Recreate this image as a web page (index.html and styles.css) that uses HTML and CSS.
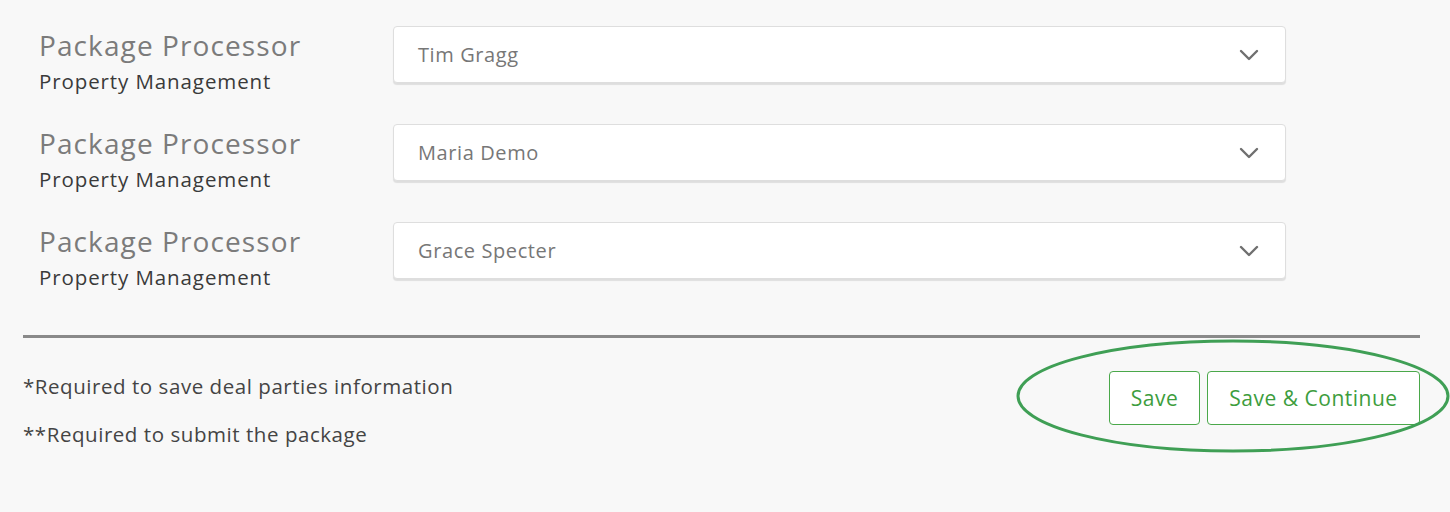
FILE: index.html
```html
<!DOCTYPE html>
<html>
<head>
<meta charset="utf-8">
<link rel="stylesheet" href="styles.css">
</head>
<body>
<div class="page">
  <div class="rows">
    <div class="row">
      <div class="label">
        <div class="title">Package Processor</div>
        <div class="sub">Property Management</div>
      </div>
      <div class="select">
        <span class="value">Tim Gragg</span>
        <svg class="chev" width="20" height="12" viewBox="0 0 20 12"><path d="M2 2 L10 10 L18 2" fill="none" stroke="#6f6f6f" stroke-width="2.4" stroke-linecap="round" stroke-linejoin="round"/></svg>
      </div>
    </div>
    <div class="row">
      <div class="label">
        <div class="title">Package Processor</div>
        <div class="sub">Property Management</div>
      </div>
      <div class="select">
        <span class="value">Maria Demo</span>
        <svg class="chev" width="20" height="12" viewBox="0 0 20 12"><path d="M2 2 L10 10 L18 2" fill="none" stroke="#6f6f6f" stroke-width="2.4" stroke-linecap="round" stroke-linejoin="round"/></svg>
      </div>
    </div>
    <div class="row">
      <div class="label">
        <div class="title">Package Processor</div>
        <div class="sub">Property Management</div>
      </div>
      <div class="select">
        <span class="value">Grace Specter</span>
        <svg class="chev" width="20" height="12" viewBox="0 0 20 12"><path d="M2 2 L10 10 L18 2" fill="none" stroke="#6f6f6f" stroke-width="2.4" stroke-linecap="round" stroke-linejoin="round"/></svg>
      </div>
    </div>
  </div>
  <hr class="sep">
  <div class="footer">
    <div class="notes">
      <p class="note">*Required to save deal parties information</p>
      <p class="note">**Required to submit the package</p>
    </div>
    <div class="actions">
      <button class="btn btn-save">Save</button>
      <button class="btn btn-cont">Save &amp; Continue</button>
      <svg class="ring" width="438" height="118" viewBox="0 0 438 118"><ellipse cx="219" cy="59" rx="215" ry="55" fill="none" stroke="#3f9f55" stroke-width="3"/></svg>
    </div>
  </div>
</div>
</body>
</html>
```
FILE: styles.css
```css
html, body {
  margin: 0;
  padding: 0;
  background: #f8f8f8;
  font-family: "Open Sans", "Lato", sans-serif;
}
.page {
  width: 1450px;
  height: 512px;
  overflow: hidden;
  box-sizing: border-box;
  padding: 26px 30px 0 23px;
}
.rows {
  display: flex;
  flex-direction: column;
  gap: 41px;
  padding-left: 16px;
}
.row {
  display: grid;
  grid-template-columns: 354px 893px;
  height: 57px;
  align-items: start;
}
.title {
  font-size: 28px;
  line-height: 38px;
  color: #7b7b7b;
  letter-spacing: 1.1px;
  white-space: nowrap;
}
.sub {
  font-size: 20.5px;
  line-height: 26px;
  color: #3a3a3a;
  margin-top: 4px;
  letter-spacing: 0.9px;
  white-space: nowrap;
}
.select {
  height: 57px;
  box-sizing: border-box;
  background: #fff;
  border: 1px solid #dedede;
  border-radius: 4px;
  box-shadow: 0 2px 1px rgba(0,0,0,0.10);
  display: flex;
  align-items: center;
  justify-content: space-between;
  padding: 0 26px 0 24px;
}
.value {
  font-size: 20px;
  color: #777;
  letter-spacing: 0.6px;
}
.chev {
  display: block;
}
.sep {
  margin: 56px 0 0 0;
  width: 1397px;
  border: 0;
  height: 3px;
  background: #8a8a8a;
}
.footer {
  display: flex;
  justify-content: space-between;
  align-items: flex-start;
  width: 1397px;
}
.notes {
  padding-top: 35px;
}
.note {
  margin: 0 0 22px 0;
  font-size: 20.5px;
  line-height: 26px;
  color: #444;
  letter-spacing: 0.55px;
  white-space: nowrap;
}
.actions {
  position: relative;
  display: flex;
  gap: 7px;
  margin-top: 33px;
}
.btn {
  height: 54px;
  box-sizing: border-box;
  background: #fff;
  border: 1px solid #4aa84a;
  border-radius: 4px;
  color: #3d9d3d;
  font-family: inherit;
  font-size: 21px;
  letter-spacing: 0.5px;
  padding: 0;
}
.btn-save { width: 91px; }
.btn-cont { width: 213px; }
.ring {
  position: absolute;
  right: -32px;
  top: -34px;
  pointer-events: none;
}
```
